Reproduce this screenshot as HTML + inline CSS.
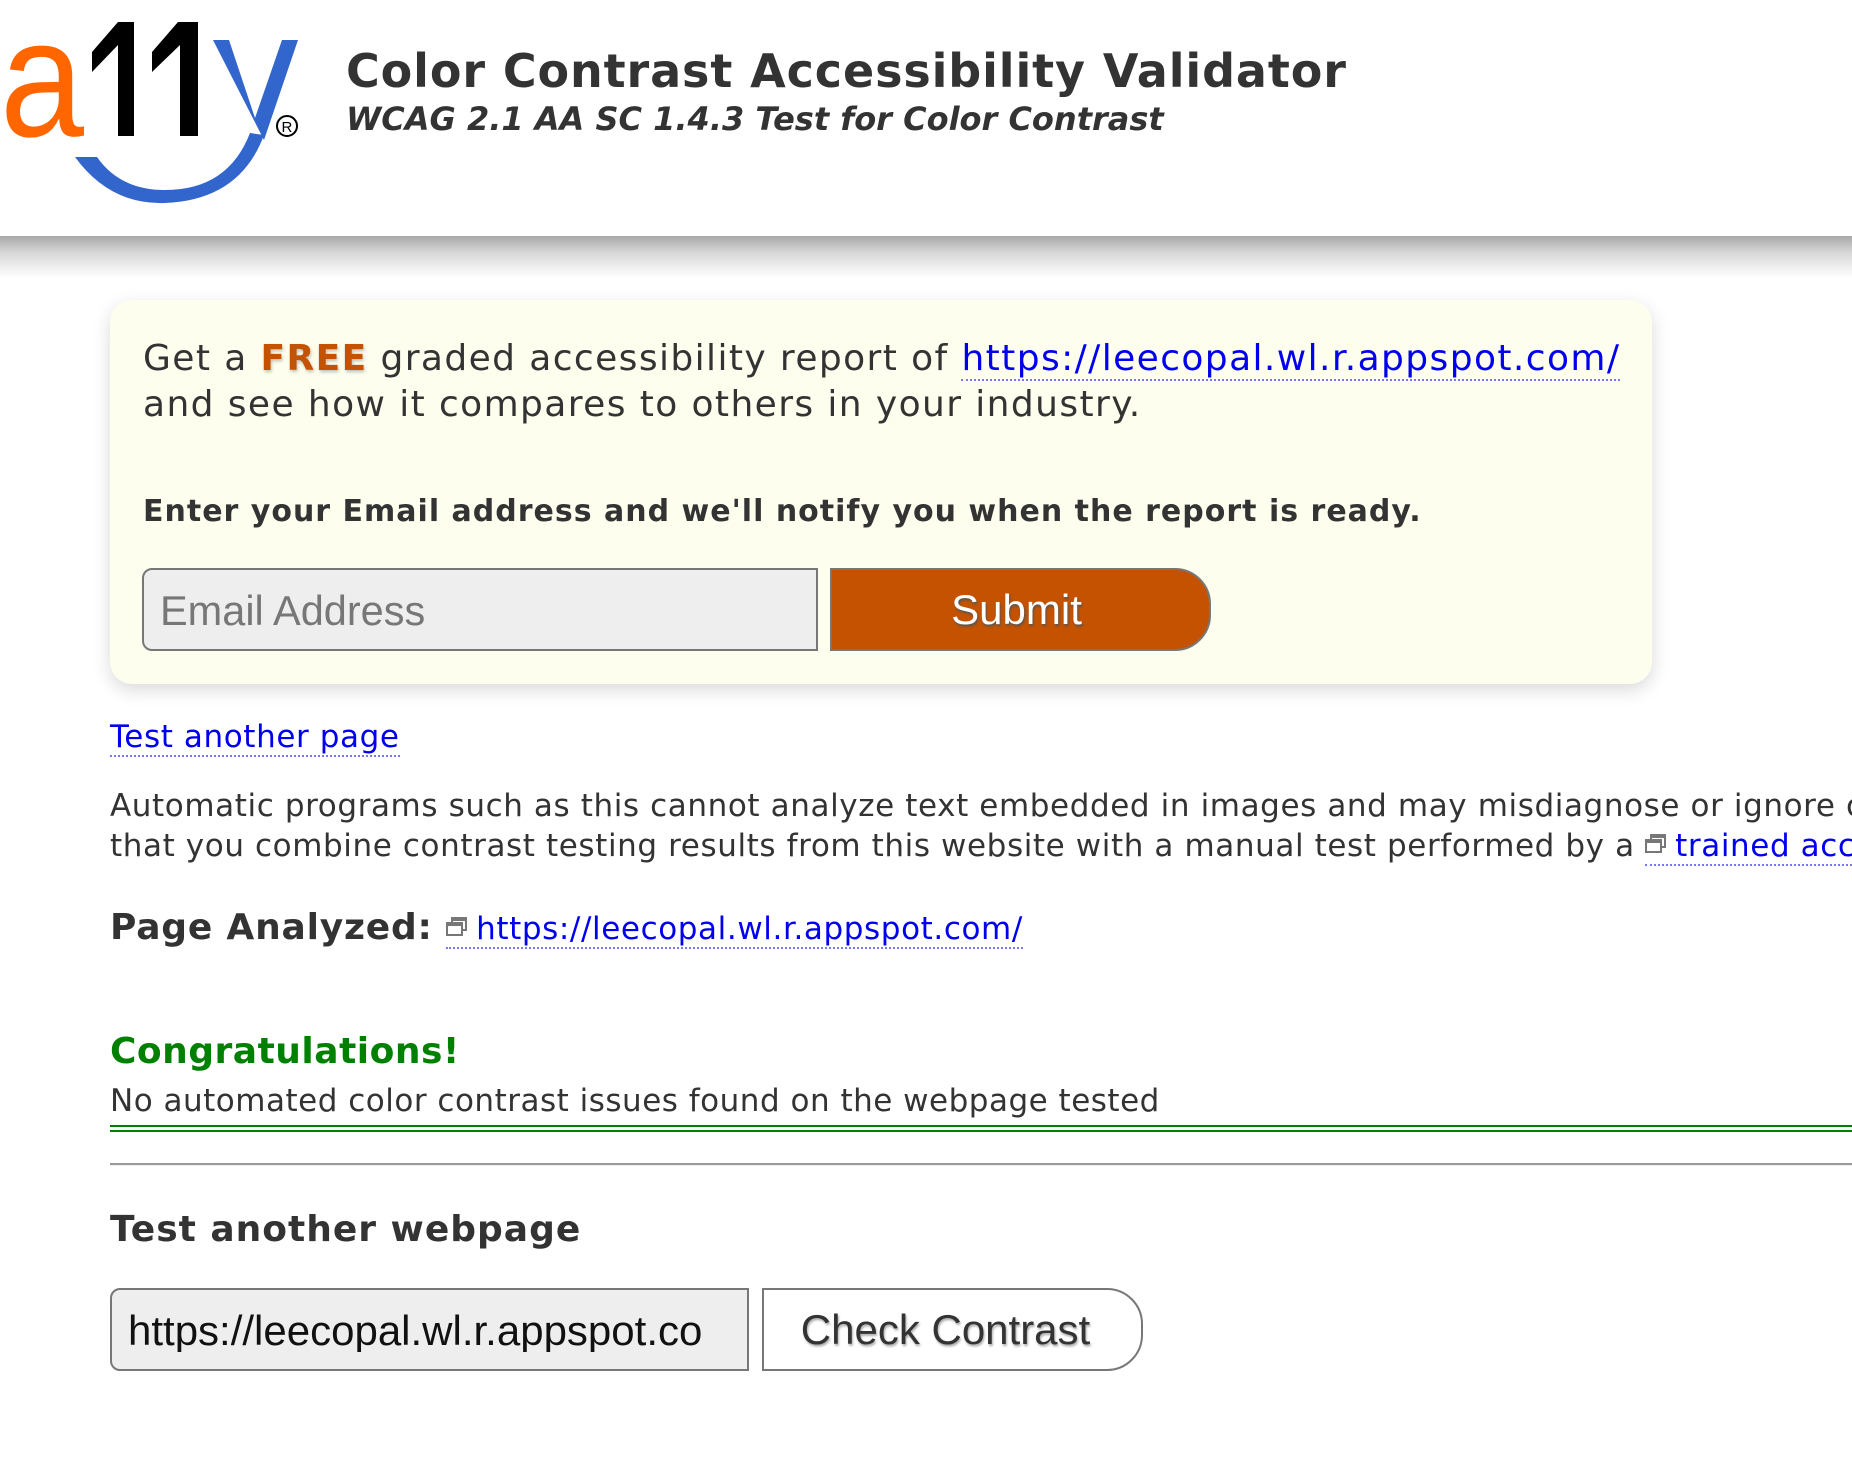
<!DOCTYPE html>
<html><head><meta charset="utf-8"><style>
html,body{margin:0;padding:0;background:#fff;width:1852px;height:1470px;overflow:hidden;position:relative;font-family:"DejaVu Sans","Liberation Sans",sans-serif;color:#333}
.a{position:absolute;white-space:nowrap;line-height:1}
a{color:#0000ee;text-decoration:none;border-bottom:2px dotted #7777ee}
.ic{display:inline-block;width:20px;height:18px;position:relative;vertical-align:4px;margin-right:10px}
.ic:before,.ic:after{content:"";position:absolute;border:2px solid #777;background:#fff;width:12px;height:8px}
.ic:before{left:5px;top:0;border-top-width:4px}
.ic:after{left:0;top:5px;border-top-width:4px;width:13px}
</style></head><body>
<div style="position:absolute;left:0;top:0;width:1852px;height:1470px;overflow:hidden">
<div style="position:absolute;left:0;top:236px;width:1852px;height:42px;background:linear-gradient(#a8a8a8,#d8d8d8 40%,#fff)"></div>
<svg class="a" style="left:0;top:0" width="310" height="215" viewBox="0 0 310 215">
<text x="0" y="136" font-family="Liberation Sans" font-size="168" fill="#ff6600" textLength="84" lengthAdjust="spacingAndGlyphs">a</text>
<path d="M92 52 L118 22 L134 22 L134 136 L118 136 L118 45 L92 72Z" fill="#000"/>
<path d="M152 52 L178 22 L198 22 L198 136 L180 136 L180 45 L152 72Z" fill="#000"/>
<path d="M213 40 L229 40 L255 118 L282 40 L298 40 L264 140" fill="#3366cc"/>
<path d="M75 157 Q110 205 165 203 Q240 200 264 135 L250 133 Q228 190 165 190 Q120 190 97 157Z" fill="#3366cc"/>
<circle cx="287" cy="126" r="10" fill="none" stroke="#000" stroke-width="2"/>
<text x="281.5" y="132" font-family="Liberation Sans" font-size="15" fill="#000">R</text>
</svg>
<div class="a" style="left:346px;top:48px;font-size:46px;font-weight:bold;color:#333;letter-spacing:0.9px">Color Contrast Accessibility Validator</div>
<div class="a" style="left:346px;top:103px;font-size:32px;font-weight:bold;font-style:italic;color:#333">WCAG 2.1 AA SC 1.4.3 Test for Color Contrast</div>

<div style="position:absolute;left:110px;top:300px;width:1542px;height:384px;background:#fefeee;border-radius:22px;box-shadow:0 6px 18px rgba(0,0,0,.15)"></div>
<div class="a" style="left:143px;top:341px;font-size:36px;color:#333;letter-spacing:1.4px">Get a <b style="color:#c45200;text-shadow:1px 2px 3px rgba(0,0,0,.25)">FREE</b> graded accessibility report of <a href="#">https://leecopal.wl.r.appspot.com/</a></div>
<div class="a" style="left:143px;top:387px;font-size:36px;color:#333;letter-spacing:1.4px">and see how it compares to others in your industry.</div>
<div class="a" style="left:143px;top:497px;font-size:30px;font-weight:bold;color:#333;letter-spacing:1px">Enter your Email address and we'll notify you when the report is ready.</div>
<div style="position:absolute;left:142px;top:568px;width:672px;height:79px;background:#eee;border:2px solid #777;border-radius:10px 0 0 10px"></div>
<div class="a" style="left:160px;top:590px;font-family:'Liberation Sans',sans-serif;font-size:41.5px;color:#777">Email Address</div>
<div style="position:absolute;left:830px;top:568px;width:377px;height:79px;background:#c45200;border:2px solid #777;border-radius:0 36px 36px 0"></div>
<div class="a" style="left:826px;width:381px;text-align:center;top:589px;font-family:'Liberation Sans',sans-serif;font-size:42px;color:#fff;text-shadow:1px 2px 2px #555">Submit</div>

<div class="a" style="left:110px;top:722px;font-size:31px;letter-spacing:0.6px"><a href="#">Test another page</a></div>
<div class="a" style="left:110px;top:791px;font-size:31px;color:#333;letter-spacing:0.6px">Automatic programs such as this cannot analyze text embedded in images and may misdiagnose or ignore colors. It is recommended</div>
<div class="a" style="left:110px;top:831px;font-size:31px;color:#333;letter-spacing:0.6px">that you combine contrast testing results from this website with a manual test performed by a <a href="#"><span class="ic"></span>trained accessibility expert</a></div>
<div class="a" style="left:110px;top:910px;font-size:36px;font-weight:bold;color:#333;letter-spacing:0.8px">Page Analyzed: <span style="font-weight:normal;font-size:31px;letter-spacing:0.6px"><a href="#"><span class="ic"></span>https://leecopal.wl.r.appspot.com/</a></span></div>
<div class="a" style="left:110px;top:1034px;font-size:36px;font-weight:bold;color:#008000;letter-spacing:0.5px">Congratulations!</div>
<div class="a" style="left:110px;top:1086px;font-size:31px;color:#333;letter-spacing:0.5px">No automated color contrast issues found on the webpage tested</div>
<div style="position:absolute;left:110px;top:1125px;width:1742px;height:2px;background:#008000"></div>
<div style="position:absolute;left:110px;top:1130px;width:1742px;height:2px;background:#008000"></div>
<div style="position:absolute;left:110px;top:1163px;width:1742px;height:2px;background:#999;border-bottom:1px solid #eee"></div>
<div class="a" style="left:110px;top:1212px;font-size:36px;font-weight:bold;color:#333;letter-spacing:1px">Test another webpage</div>
<div style="position:absolute;left:110px;top:1288px;width:635px;height:79px;background:#eee;border:2px solid #777;border-radius:10px 0 0 10px"></div>
<div class="a" style="left:128px;top:1310px;width:576px;overflow:hidden;font-family:'Liberation Sans',sans-serif;font-size:42px;color:#111">https://leecopal.wl.r.appspot.com/</div>
<div style="position:absolute;left:762px;top:1288px;width:377px;height:79px;background:#fff;border:2px solid #777;border-radius:0 36px 36px 0"></div>
<div class="a" style="left:755px;width:381px;text-align:center;top:1309px;font-family:'Liberation Sans',sans-serif;font-size:42px;color:#333;text-shadow:1px 2px 2px #aaa">Check Contrast</div>
</div>
</body></html>
